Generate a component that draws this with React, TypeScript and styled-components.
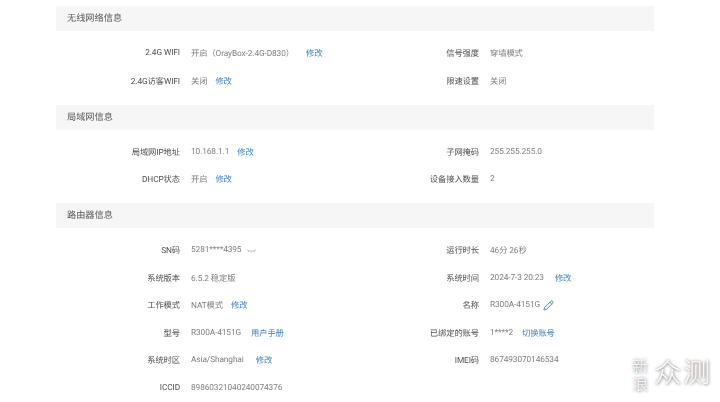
import React from "react";
import styled, { createGlobalStyle } from "styled-components";
import { Pencil } from "lucide-react";

const Global = createGlobalStyle`
  html, body { margin: 0; padding: 0; background: #fff; }
  body { width: 720px; height: 402px; overflow: hidden; }
`;

const Page = styled.div`
  position: relative;
  width: 720px;
  height: 402px;
  padding: 6px 66px 0 56px;
  box-sizing: border-box;
  overflow: hidden;
  font-family: Roboto, "Noto Sans CJK SC", sans-serif;
  font-size: 8.3px;
  letter-spacing: -0.1px;
  text-rendering: geometricPrecision;
`;

const Content = styled.div`
  filter: blur(0.4px);
`;

const SectionTitle = styled.div`
  height: 25px;
  line-height: 26px;
  padding-left: 11px;
  background: #f6f6f6;
  color: #555;
  font-size: 9.2px;
  letter-spacing: 0;
`;

const Grid = styled.div`
  display: grid;
  grid-template-columns: 299px 299px;
  grid-auto-rows: 27.5px;
  padding: 8.5px 0 10px;
`;

const Row = styled.div`
  display: flex;
  align-items: center;
  white-space: nowrap;
`;

const Label = styled.span`
  flex: none;
  width: 124px;
  margin-right: 11px;
  text-align: right;
  color: #505050;
`;

const Value = styled.span`
  color: #808080;
`;

const Action = styled.span<{ $gap?: number }>`
  margin-left: ${(p) => p.$gap ?? 8}px;
  color: #3f7fc4;
`;

const EyeIcon = styled.svg`
  width: 11px;
  height: 5px;
  margin-left: 5px;
`;

const EditIcon = styled(Pencil)`
  width: 11px;
  height: 11px;
  margin-left: 3px;
  color: #3f7fc4;
`;

const Watermark = styled.div`
  position: absolute;
  left: 632px;
  top: 356px;
  display: flex;
  align-items: flex-start;
  gap: 5px;
  color: #fff;
  font-family: "Noto Sans CJK SC", sans-serif;
  font-weight: 300;
  text-shadow: 0 0 3px rgba(0, 0, 0, 0.45), 1px 1px 3px rgba(0, 0, 0, 0.3);
`;

const WatermarkSide = styled.div`
  width: 17px;
  font-size: 16px;
  line-height: 18px;
`;

const WatermarkMain = styled.div`
  font-size: 27px;
  line-height: 30px;
  letter-spacing: 2px;
`;

type Cell = {
  label: string;
  value: string;
  action?: string;
  gap?: number;
  eye?: boolean;
  edit?: boolean;
};

const sections: { title: string; cells: Cell[] }[] = [
  {
    title: "无线网络信息",
    cells: [
      { label: "2.4G WIFI", value: "开启（OrayBox-2.4G-D830）", action: "修改", gap: 12 },
      { label: "信号强度", value: "穿墙模式" },
      { label: "2.4G访客WIFI", value: "关闭", action: "修改" },
      { label: "限速设置", value: "关闭" },
    ],
  },
  {
    title: "局域网信息",
    cells: [
      { label: "局域网IP地址", value: "10.168.1.1", action: "修改" },
      { label: "子网掩码", value: "255.255.255.0" },
      { label: "DHCP状态", value: "开启", action: "修改" },
      { label: "设备接入数量", value: "2" },
    ],
  },
  {
    title: "路由器信息",
    cells: [
      { label: "SN码", value: "5281****4395", eye: true },
      { label: "运行时长", value: "46分 26秒" },
      { label: "系统版本", value: "6.5.2 稳定版" },
      { label: "系统时间", value: "2024-7-3 20:23", action: "修改", gap: 11 },
      { label: "工作模式", value: "NAT模式", action: "修改" },
      { label: "名称", value: "R300A-4151G", edit: true },
      { label: "型号", value: "R300A-4151G", action: "用户手册", gap: 10 },
      { label: "已绑定的账号", value: "1****2", action: "切换账号", gap: 9 },
      { label: "系统时区", value: "Asia/Shanghai", action: "修改", gap: 12 },
      { label: "IMEI码", value: "867493070146534" },
      { label: "ICCID", value: "89860321040240074376" },
    ],
  },
];

export default function App() {
  return (
    <Page>
      <Global />
      <Content>
        {sections.map((s) => (
          <section key={s.title}>
            <SectionTitle>{s.title}</SectionTitle>
            <Grid>
              {s.cells.map((c) => (
                <Row key={c.label}>
                  <Label>{c.label}</Label>
                  <Value>{c.value}</Value>
                  {c.action && <Action $gap={c.gap}>{c.action}</Action>}
                  {c.eye && (
                    <EyeIcon viewBox="0 0 11 5" fill="none" stroke="#aaa" strokeWidth="0.7">
                      <path d="M1 1.5c2.5 2.2 6.5 2.2 9 0M3 3l-.8 1.2M5.5 3.4v1.2M8 3l.8 1.2" />
                    </EyeIcon>
                  )}
                  {c.edit && <EditIcon strokeWidth={2} />}
                </Row>
              ))}
            </Grid>
          </section>
        ))}
      </Content>
      <Watermark>
        <WatermarkSide>新浪</WatermarkSide>
        <WatermarkMain>众测</WatermarkMain>
      </Watermark>
    </Page>
  );
}
